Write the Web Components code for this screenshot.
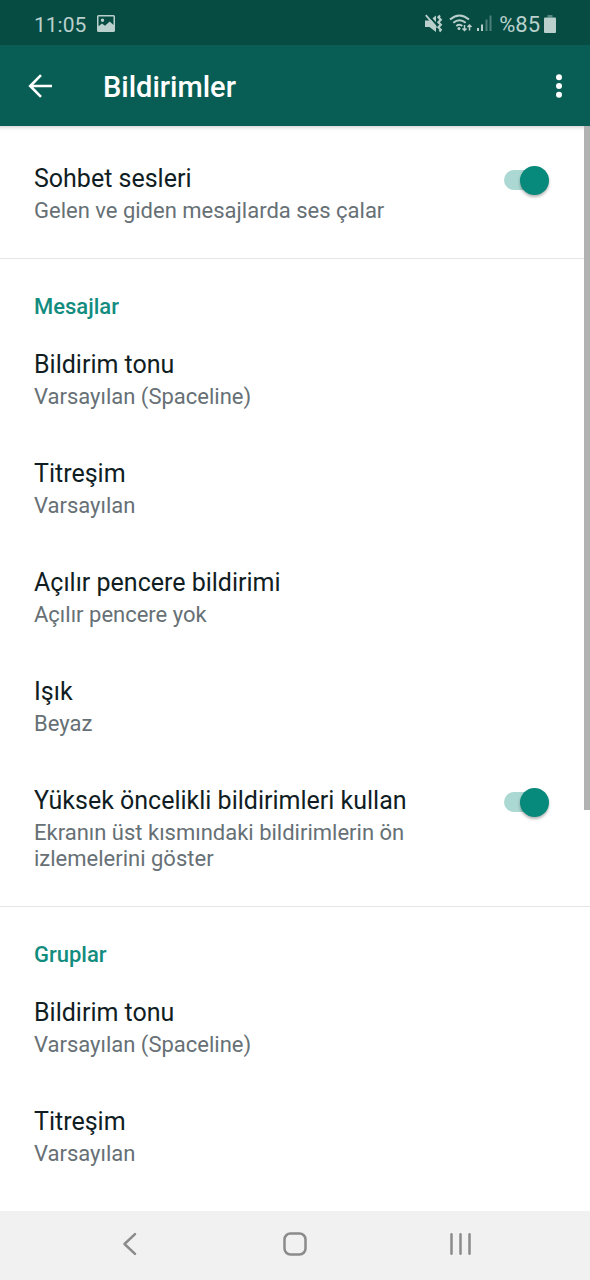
<!DOCTYPE html>
<html lang="tr">
<head>
<meta charset="utf-8">
<meta name="viewport" content="width=device-width, initial-scale=1">
<title>Bildirimler</title>
<style>
  html, body { margin: 0; height: 100%; }
  body { font-family: Roboto, "Noto Sans", sans-serif; color: #101d23; background: #fff; }
</style>
</head>
<body>
<settings-screen>
  <status-bar slot="top" time="11:05" battery="%85"></status-bar>
  <app-bar slot="top">Bildirimler</app-bar>

  <settings-section>
    <toggle-row label="Sohbet sesleri" checked>Gelen ve giden mesajlarda ses çalar</toggle-row>
  </settings-section>

  <settings-section heading="Mesajlar">
    <setting-row label="Bildirim tonu">Varsayılan (Spaceline)</setting-row>
    <setting-row label="Titreşim">Varsayılan</setting-row>
    <setting-row label="Açılır pencere bildirimi">Açılır pencere yok</setting-row>
    <setting-row label="Işık">Beyaz</setting-row>
    <toggle-row label="Yüksek öncelikli bildirimleri kullan" checked>Ekranın üst kısmındaki bildirimlerin ön izlemelerini göster</toggle-row>
  </settings-section>

  <settings-section heading="Gruplar">
    <setting-row label="Bildirim tonu">Varsayılan (Spaceline)</setting-row>
    <setting-row label="Titreşim">Varsayılan</setting-row>
  </settings-section>

  <nav-bar slot="bottom"></nav-bar>
</settings-screen>

<script>
class BaseElement extends HTMLElement {
  connectedCallback() {
    if (this.shadowRoot) return;
    this.attachShadow({ mode: "open" }).innerHTML = this.render();
  }
}

customElements.define("settings-screen", class extends BaseElement {
  render() {
    return `
      <style>
        :host { display: flex; flex-direction: column; height: 100vh; }
        main { flex: 1; min-height: 0; position: relative; overflow: hidden; box-shadow: inset 0 5px 4px -4px rgba(0,0,0,.22); }
        .thumb { position: absolute; top: 0; right: 0; width: 6px; height: 63%; background: #b2b2b2; }
      </style>
      <header><slot name="top"></slot></header>
      <main><slot></slot><div class="thumb"></div></main>
      <slot name="bottom"></slot>`;
  }
});

customElements.define("status-bar", class extends BaseElement {
  render() {
    return `
      <style>
        :host { display: flex; align-items: center; justify-content: space-between; height: 45px;
                padding: 4px 34px 0 34px; box-sizing: border-box; background: #064c43; color: #b9d0cc;
                line-height: 26px; }
        div { display: flex; align-items: center; }
        .left { gap: 11px; font-size: 21px; }
        .right { gap: 7px; font-size: 22px; }
        .charge { display: flex; align-items: center; gap: 4px; }
        svg { display: block; fill: currentColor; margin-bottom: 2px; }
      </style>
      <div class="left">
        <span>${this.getAttribute("time")}</span>
        <svg width="18" height="17" viewBox="0 0 18 17" aria-hidden="true">
          <path fill-rule="evenodd" d="M1.500 0h15A1.500 1.500 0 0 1 18 1.500v14a1.500 1.500 0 0 1-1.500 1.500h-15A1.500 1.500 0 0 1 0 15.500v-14A1.500 1.500 0 0 1 1.500 0zM1.500 1.500v9.700l3.500-2.700 3 2.200 4.700-4.200 3.800 3.600V1.500zM5.500 3.500a1.700 1.700 0 1 1 0 3.400 1.700 1.700 0 0 1 0-3.400z"/>
        </svg>
      </div>
      <div class="right">
        <svg width="67" height="20" viewBox="0 0 67 20" aria-hidden="true">
          <path d="M0 6.500h4.500L11 1.500v16.500l-6.500-5H0z"/>
          <path d="M2.500.2l10 11.300" stroke="#064c43" stroke-width="2"/>
          <path d="M.8 1.200l10.700 12.500" stroke="currentColor" stroke-width="1.800"/>
          <path d="M15 1.500l-1.600 1.800 2.400 2.500-2.400 2.500 2.400 2.500-2.400 2.500 2.400 2.500-1.300 1.700" fill="none" stroke="currentColor" stroke-width="2.200"/>
          <g fill="none" stroke="currentColor" stroke-width="2">
            <path d="M25 5.500q9.500-8 19 0M28.300 8.800q6.200-5 12.400 0M31.300 12q3.200-2.500 6 0"/>
          </g>
          <circle cx="34" cy="14.500" r="1.500"/>
          <path d="M39.500 11v5.500M37.500 14.500l2 2 2-2M44.500 16.500V11M42.500 13l2-2 2 2" fill="none" stroke="currentColor" stroke-width="1.500"/>
          <path d="M52 14h2v3h-2zM56 10.500h2V17h-2z"/>
          <path d="M60.500 5.500h2V17h-2zM64.500 1.500h2V17h-2z" opacity=".4"/>
        </svg>
        <div class="charge">
          <span>${this.getAttribute("battery")}</span>
          <svg width="12" height="18" viewBox="0 0 12 18" aria-hidden="true">
            <path d="M3.500 0h5v2.500h-5z" opacity=".45"/><path d="M0 3.500q0-1 1-1h10q1 0 1 1V17q0 1-1 1H1q-1 0-1-1z"/>
          </svg>
        </div>
      </div>`;
  }
});

customElements.define("app-bar", class extends BaseElement {
  render() {
    return `
      <style>
        :host { display: flex; align-items: center; height: 81px; padding: 0 18px 0 20px; box-sizing: border-box;
                background: #085e54; color: #fff; }
        button { all: unset; display: grid; place-items: center; height: 40px; cursor: pointer; }
        .back { width: 40px; }
        .more { width: 26px; }
        h1 { flex: 1; margin: 0 0 0 43px; padding-top: 2px; font-size: 29px; line-height: 34px; font-weight: 500; }
      </style>
      <button class="back" aria-label="Geri">
        <svg width="24" height="24" viewBox="0 0 24 24" fill="none" stroke="#fff" stroke-width="2.600"><path d="M24 12H2.500M13 1.200L2.200 12 13 22.800"/></svg>
      </button>
      <h1><slot></slot></h1>
      <button class="more" aria-label="Diğer seçenekler">
        <svg width="8" height="24" viewBox="0 0 8 24" fill="#fff"><circle cx="4" cy="3.200" r="3"/><circle cx="4" cy="12" r="3"/><circle cx="4" cy="20.800" r="3"/></svg>
      </button>`;
  }
});

customElements.define("settings-section", class extends BaseElement {
  render() {
    const heading = this.getAttribute("heading");
    return `
      <style>
        :host { display: block; padding-bottom: 9px; border-bottom: 1px solid #e4e4e4; }
        :host(:last-of-type) { border-bottom: 0; }
        :host(:not([heading])) { padding-top: 14px; }
        h2 { margin: 0; padding: 34px 34px 5px; font-size: 22px; line-height: 28px; font-weight: 500; color: #128c7e; }
      </style>
      ${heading ? `<h2>${heading}</h2>` : ""}
      <slot></slot>`;
  }
});

const rowStyles = `
  :host { display: block; }
  .row { display: flex; box-sizing: border-box; width: 100%; padding: 24px 41px 25px 34px; cursor: pointer; text-align: left; }
  .text { flex: 1; display: flex; flex-direction: column; gap: 4px; }
  .label { font-size: 25px; line-height: 30px; color: #101d23; }
  .detail { font-size: 22px; line-height: 26px; color: #667075; }
`;

customElements.define("setting-row", class extends BaseElement {
  render() {
    return `
      <style>
        button { border: 0; margin: 0; background: none; font: inherit; }
        ${rowStyles}
      </style>
      <button class="row">
        <span class="text"><span class="label">${this.getAttribute("label")}</span><span class="detail"><slot></slot></span></span>
      </button>`;
  }
});

customElements.define("toggle-row", class extends BaseElement {
  render() {
    return `
      <style>
        ${rowStyles}
        .row { gap: 35px; }
        input { appearance: none; flex: none; display: grid; align-items: center; width: 45px; height: 32px; margin: 0; cursor: pointer; }
        input::before, input::after { content: ""; grid-area: 1 / 1; }
        input::before { width: 41px; height: 20px; border-radius: 10px; background: #abd8d2; }
        input::after { width: 29px; height: 29px; border-radius: 50%; background: #f1f1f1; box-shadow: 0 2px 3px rgba(0,0,0,.3); }
        input:not(:checked)::before { background: #c4c4c4; }
        input:checked::after { justify-self: end; background: #07897b; }
      </style>
      <label class="row">
        <span class="text"><span class="label">${this.getAttribute("label")}</span><span class="detail"><slot></slot></span></span>
        <input type="checkbox" role="switch" ${this.hasAttribute("checked") ? "checked" : ""}>
      </label>`;
  }
});

customElements.define("nav-bar", class extends BaseElement {
  render() {
    return `
      <style>
        :host { display: block; background: #f1f1f1; }
        nav { display: grid; grid-template-columns: repeat(3, 1fr); height: 69px; padding: 0 8%; }
        button { all: unset; display: grid; place-items: center; cursor: pointer; padding-bottom: 3px; }
        svg { fill: none; stroke: #8b8b8b; stroke-width: 2.500; stroke-linecap: round; stroke-linejoin: round; }
      </style>
      <nav>
        <button aria-label="Geri"><svg width="24" height="24" viewBox="0 0 24 24"><path d="M17 2.200L6.500 12 17 21.800"/></svg></button>
        <button aria-label="Ana ekran"><svg width="24" height="24" viewBox="0 0 24 24"><rect x="1.500" y="1.500" width="21" height="21" rx="6"/></svg></button>
        <button aria-label="Son uygulamalar"><svg width="24" height="24" viewBox="0 0 24 24"><path d="M3.500 2.200v19.600M12.500 2.200v19.600M21.500 2.200v19.600"/></svg></button>
      </nav>`;
  }
});
</script>
</body>
</html>
